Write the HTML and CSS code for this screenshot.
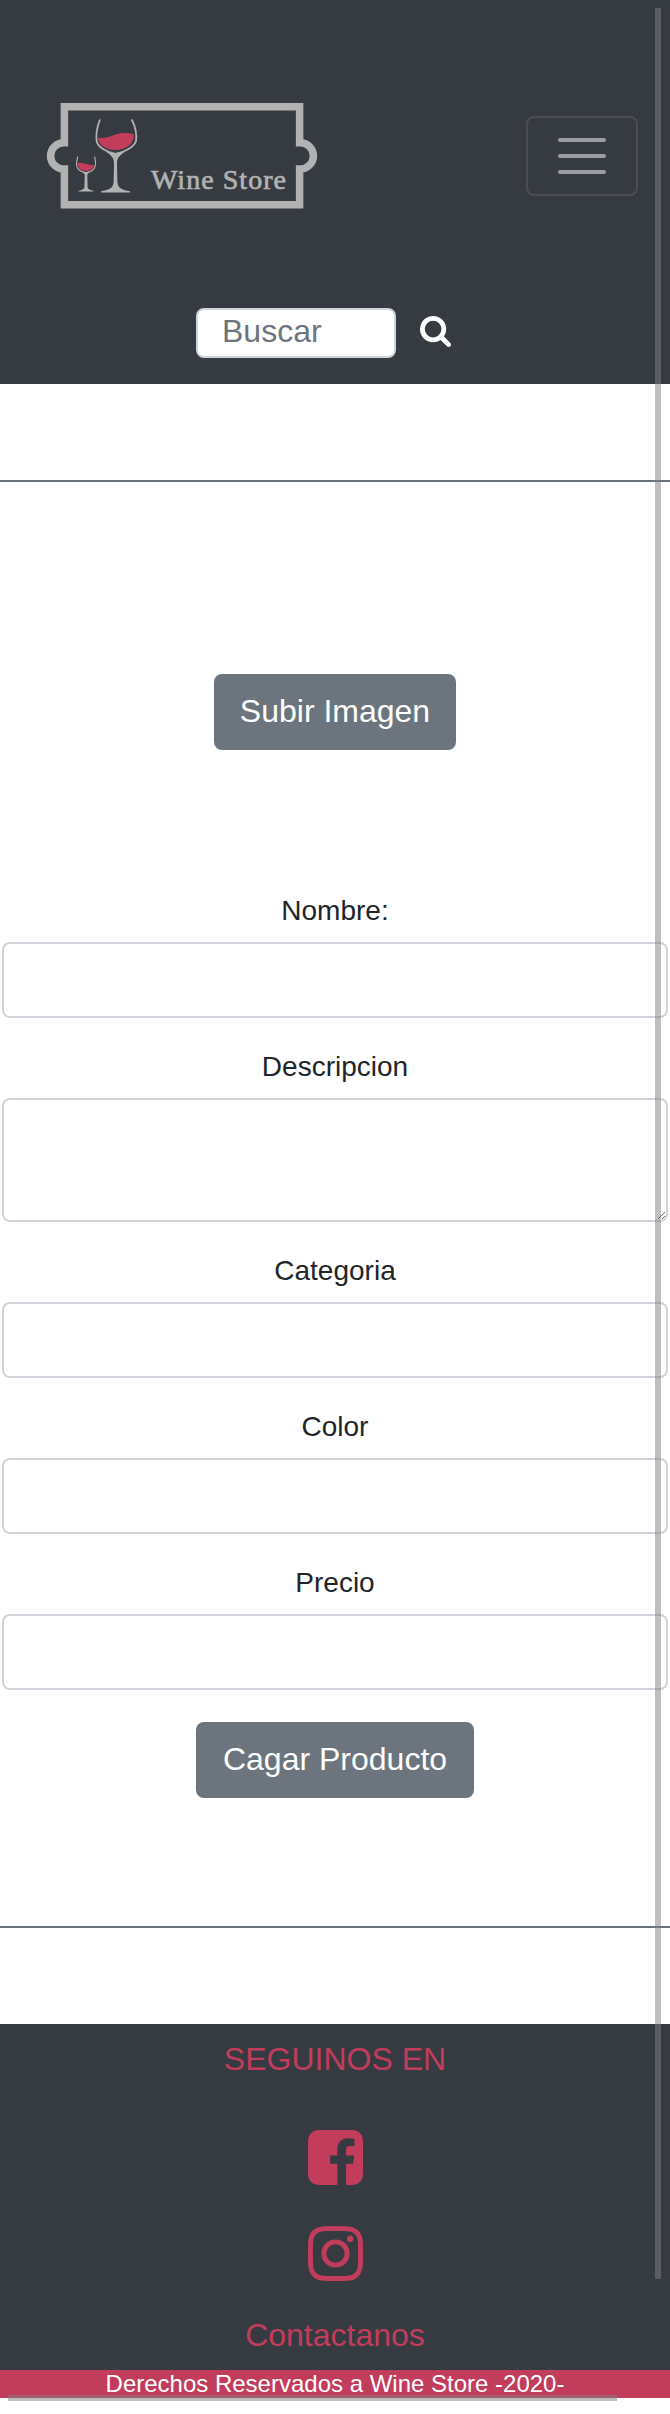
FILE: index.html
```html
<!DOCTYPE html>
<html lang="es">
<head>
<meta charset="utf-8">
<title>Wine Store</title>
<link rel="stylesheet" href="styles.css">
</head>
<body>
<header class="header">
  <div class="topbar">
    <svg class="logo" width="274" height="110" viewBox="45 101 274 110" role="img" aria-label="Wine Store">
      <path class="logo-frame" d="M64.400 106.800H299.600V142.800H300.300A13.100 13.100 0 0 1 300.300 169H299.600V204.800H64.400V169H63.700A13.100 13.100 0 0 1 63.700 142.800H64.400Z"/>
      <g class="glass">
        <path class="rim" d="M100 119.500C97 127 95.800 134 96.600 141C98 147 106 152 115.500 154C125 152 134 147 136 141C137 134 135.500 127 131.800 119.500"/>
        <path class="wine" d="M98 137.800C110 139 115 132.500 125 133C129 133 131 133.300 133.800 134.300C134.500 144 126 150 115.500 150C106 150 99 145.500 98 137.800Z"/>
        <path class="foot" d="M106 151.800Q115.500 155 125 151.800C119 156 117 158 117 164L117.400 182C118 189 123 190 130 191.200V192.500H101V191.200C108 190 113 189 113.600 182L114 164C114 158 112 156 106 151.800Z"/>
      </g>
      <g class="glass">
        <path class="rim thin" d="M77.800 156.500C76 163 76 166 77.500 168C79 171 82 172 86 172.500C90 172 93 171 94.500 168C96 165 95.500 160 94.500 156.500"/>
        <path class="wine" d="M77.500 163C83 162 88 166 94.300 164.800C94 169 90 171 86 171C81 171 77.500 168 77.500 163Z"/>
        <path class="foot" d="M82 171.500Q86 173 90 171.500L87.300 174.500L87.600 187.500Q88.500 190 93.500 190.700V191.400H78.500V190.700Q83.500 190 84.400 187.500L84.800 174.500Z"/>
      </g>
      <text class="logo-text" x="151" y="189" textLength="135">Wine Store</text>
    </svg>
    <button class="toggler" type="button" aria-label="Menu">
      <svg width="60" height="60" viewBox="0 0 30 30"><path d="M4 7h22M4 15h22M4 23h22"/></svg>
    </button>
  </div>
  <form class="search">
    <input class="search-input" type="text" placeholder="Buscar" aria-label="Buscar">
    <svg class="search-icon" width="31" height="31" viewBox="64 128 1664 1664"><path d="M1216 832q0-185-131.500-316.500t-316.500-131.500-316.500 131.500-131.500 316.500 131.500 316.500 316.500 131.500 316.500-131.500 131.500-316.500zm512 832q0 52-38 90t-90 38q-54 0-90-38l-343-342q-179 124-399 124-143 0-273.500-55.500t-225-150-150-225-55.500-273.500 55.500-273.500 150-225 225-150 273.500-55.500 273.500 55.500 225 150 150 225 55.500 273.500q0 220-124 399l343 343q37 37 37 90z"/></svg>
  </form>
</header>

<main class="content">
  <form class="product">
    <button class="btn upload" type="button">Subir Imagen</button>
    <label class="field"><span class="label">Nombre:</span><input class="control" type="text"></label>
    <label class="field"><span class="label">Descripcion</span><textarea class="control area"></textarea></label>
    <label class="field"><span class="label">Categoria</span><input class="control" type="text"></label>
    <label class="field"><span class="label">Color</span><input class="control" type="text"></label>
    <label class="field"><span class="label">Precio</span><input class="control" type="text"></label>
    <button class="btn submit" type="button">Cagar Producto</button>
  </form>
</main>

<footer class="footer">
  <div class="footer-title">SEGUINOS EN</div>
  <svg class="social facebook" width="55" height="55" viewBox="128 128 1536 1536"><path d="M1376 128q119 0 203.500 84.500t84.500 203.500v960q0 119-84.500 203.500t-203.500 84.500h-188v-595h199l30-232h-229v-148q0-56 23.500-84t91.500-28l122-1v-207q-63-9-178-9-136 0-217.500 80t-81.500 226v171h-200v232h200v595h-532q-119 0-203.500-84.500t-84.500-203.500v-960q0-119 84.500-203.500t203.500-84.500h960z"/></svg>
  <svg class="social instagram" width="55" height="55" viewBox="128 128 1536 1536"><path d="M1152 896q0-106-75-181t-181-75-181 75-75 181 75 181 181 75 181-75 75-181zm138 0q0 164-115 279t-279 115-279-115-115-279 115-279 279-115 279 115 115 279zm108-410q0 38-27 65t-65 27-65-27-27-65 27-65 65-27 65 27 27 65zm-502-220q-7 0-76.500-.5t-105.500 0-96.500 3-103 10-71.500 18.500q-50 20-88 58t-58 88q-11 29-18.500 71.500t-10 103-3 96.500 0 105.500.5 76.500-.5 76.500 0 105.500 3 96.500 10 103 18.500 71.500q20 50 58 88t88 58q29 11 71.500 18.500t103 10 96.500 3 105.500 0 76.500-.5 76.500.5 105.500 0 96.500-3 103-10 71.500-18.500q50-20 88-58t58-88q11-29 18.500-71.500t10-103 3-96.500 0-105.500-.5-76.500.5-76.500 0-105.500-3-96.500-10-103-18.500-71.500q-20-50-58-88t-88-58q-29-11-71.500-18.500t-103-10-96.500-3-105.500 0-76.500.5zm768 630q0 229-5 317-10 208-124 322t-322 124q-88 5-317 5t-317-5q-208-10-322-124t-124-322q-5-88-5-317t5-317q10-208 124-322t322-124q88-5 317-5t317 5q208 10 322 124t124 322q5 88 5 317z"/></svg>
  <div class="contact">Contactanos</div>
  <div class="rights">Derechos Reservados a Wine Store -2020-</div>
</footer>

<div class="scrollbar vertical"></div>
<div class="scrollbar horizontal"></div>
</body>
</html>
```
FILE: styles.css
```css
* {
  box-sizing: border-box;
}

body {
  position: relative;
  margin: 0;
  height: 2414px;
  overflow: hidden;
  background: #fff;
  color: #212529;
  font-family: "Liberation Sans", Arial, sans-serif;
  font-size: 28px;
  line-height: 42px;
}

svg {
  display: block;
}

input,
textarea,
button {
  font-family: inherit;
}

/* Header */
.header {
  height: 384px;
  padding-top: 101px;
  background: #363a41;
}

.topbar {
  display: flex;
  justify-content: space-between;
  align-items: center;
  height: 110px;
  padding: 0 32px 0 45px;
}

.logo-frame {
  fill: none;
  stroke: #b2b2b2;
  stroke-width: 7.500px;
}

.rim {
  fill: none;
  stroke: #b2b2b2;
  stroke-width: 1.800px;
}

.thin {
  stroke-width: 1.100px;
}

.wine {
  fill: #c23c5c;
}

.foot {
  fill: #b2b2b2;
}

.logo-text {
  fill: #b2b2b2;
  stroke: #b2b2b2;
  stroke-width: 0.700px;
  font-family: "Liberation Serif", serif;
  font-size: 28px;
}

.toggler {
  display: flex;
  align-items: center;
  justify-content: center;
  width: 112px;
  height: 80px;
  padding: 0;
  border: 2px solid #4a4e52;
  border-radius: 8px;
  background: none;
}

.toggler path {
  stroke: #9a9c9f;
  stroke-width: 2;
  stroke-linecap: round;
}

.search {
  display: flex;
  gap: 24px;
  padding: 97px 0 0 196px;
}

.search-input {
  width: 200px;
  height: 50px;
  padding: 0 24px 3px;
  border: 2px solid #ced4da;
  border-radius: 8px;
  background: #fff;
  font-size: 32px;
}

.search-input::placeholder {
  color: #6c757d;
  opacity: 1;
}

.search-icon {
  margin-top: 8px;
  fill: #fff;
}

/* Product form */
.content {
  height: 1448px;
  margin: 96px 0;
  border-top: 2px solid #6c757d;
  border-bottom: 2px solid #6c757d;
}

.product {
  display: flex;
  flex-direction: column;
  align-items: center;
  padding: 192px 2px 0;
}

.btn {
  height: 76px;
  padding: 0 0 2px;
  border: 0;
  border-radius: 8px;
  background: #6c757d;
  color: #fff;
  font-size: 32px;
}

.upload {
  width: 242px;
  margin-bottom: 112px;
}

.submit {
  width: 278px;
  margin-top: 32px;
}

.field {
  display: flex;
  flex-direction: column;
  width: 100%;
  margin-top: 28px;
  text-align: center;
}

.label {
  margin-bottom: 10px;
}

.control {
  width: 100%;
  height: 76px;
  padding: 12px 24px;
  border: 2px solid #ced4da;
  border-radius: 8px;
  background: #fff;
  font-size: 28px;
}

.area {
  height: 124px;
}

/* Footer */
.footer {
  display: flex;
  flex-direction: column;
  align-items: center;
  height: 374px;
  padding-top: 11px;
  background: #363a41;
  color: #c23c5c;
  font-size: 32px;
  line-height: 48px;
}

.social {
  fill: #c23c5c;
}

.facebook {
  margin-top: 47px;
}

.instagram {
  margin-top: 41px;
}

.contact {
  margin-top: 30px;
}

.rights {
  width: 100%;
  height: 28px;
  margin-top: auto;
  background: #c23c5c;
  color: #fff;
  font-size: 24px;
  line-height: 28px;
  text-align: center;
}

/* Overlay scrollbars */
.scrollbar {
  position: absolute;
  background: rgba(128, 128, 128, 0.5);
}

.vertical {
  top: 8px;
  left: 655px;
  width: 6px;
  height: 2271px;
}

.horizontal {
  top: 2395px;
  left: 8px;
  width: 609px;
  height: 6px;
}
```
